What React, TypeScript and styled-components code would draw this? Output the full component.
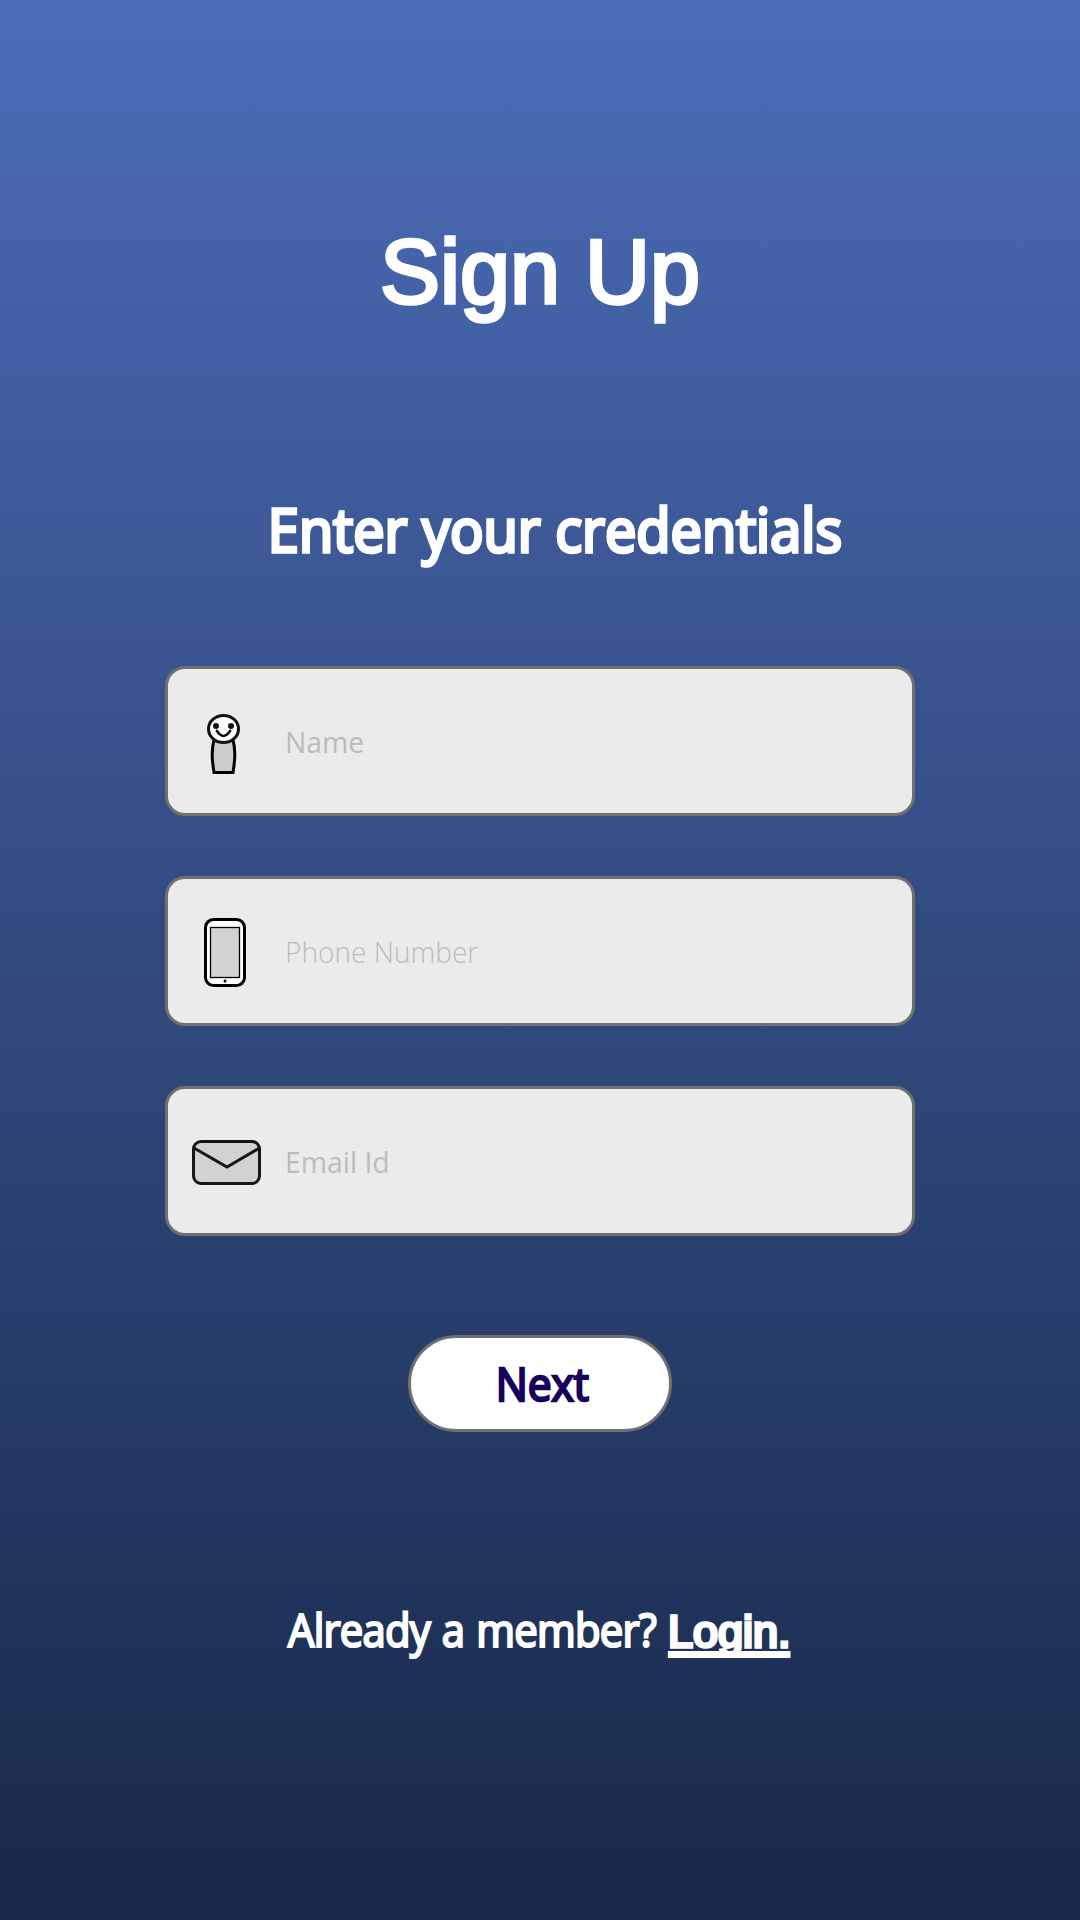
import React from "react";
import styled, { createGlobalStyle } from "styled-components";

const GlobalStyle = createGlobalStyle`
  * { box-sizing: border-box; }
  body { margin: 0; }
`;

const sans = `"Segoe UI", "Open Sans", "Noto Sans", sans-serif`;
const arial = `Arial, "Liberation Sans", sans-serif`;

const Screen = styled.main`
  display: flex;
  flex-direction: column;
  align-items: center;
  width: 1080px;
  height: 1920px;
  overflow: hidden;
  background: linear-gradient(180deg, #4b6cb7 0%, #182848 100%);
  color: #fff;
  white-space: nowrap;
`;

const Title = styled.h1`
  margin: 222px 0 0;
  font: 400 90px/100px ${arial};
  transform: scaleY(1.015);
  transform-origin: 50% 82%;
  -webkit-text-stroke: 3.4px #fff;
`;

const Subtitle = styled.h2`
  margin: 167px 0 0;
  padding-left: 33px;
  font: 400 60px/80px ${sans};
  transform: scaleX(0.932);
  -webkit-text-stroke: 3.6px #fff;
`;

const Fields = styled.form`
  display: flex;
  flex-direction: column;
  gap: 60px;
  margin-top: 97px;
`;

const Field = styled.div`
  display: flex;
  align-items: center;
  width: 750px;
  height: 150px;
  border: 3px solid #707070;
  border-radius: 20px;
  background: #ebebeb;
`;

const IconSlot = styled.span`
  display: flex;
  width: 117px;
  height: 144px;

  svg { display: block; }
`;

const Hint = styled.span<{ $weight: number; $stretch: number }>`
  padding-top: 2px;
  color: #bcbcbc;
  font: ${(p) => p.$weight} 30px/40px ${sans};
  transform: scaleX(${(p) => p.$stretch});
  transform-origin: left;
`;

const NextButton = styled.button`
  display: flex;
  align-items: center;
  justify-content: center;
  width: 264px;
  height: 97px;
  margin: 99px 0 0;
  padding: 1px 0 0 4px;
  border: 3px solid #707070;
  border-radius: 49px;
  background: #fff;
  color: #16006e;
  font: 400 45px/60px ${sans};
  -webkit-text-stroke: 2.4px #170058;

  span { transform: scaleX(0.945); }
`;

const Footer = styled.p`
  display: flex;
  align-items: baseline;
  justify-content: space-between;
  width: 503px;
  margin: 168px 2px 0 0;
  font: 400 45px/60px ${sans};
  -webkit-text-stroke: 2.2px #fff;
`;

const Question = styled.span`
  width: 369px;
  letter-spacing: -0.85px;
  word-spacing: 2px;
  transform: scaleX(0.93);
  transform-origin: left;
`;

const LoginLink = styled.a`
  color: #fff;
  font-family: ${arial};
  text-decoration: underline;
  text-decoration-skip-ink: none;
  text-decoration-thickness: 7px;
  text-underline-offset: 4px;
  -webkit-text-stroke: 3.4px #fff;
`;

const PersonIcon = () => (
  <svg width="116" height="144" viewBox="168 669 116 144" fill="none">
    <path d="M214.5 738C211 750 212 760 214 772.5H233C235 760 236 750 232.5 738Z" fill="#ccc" stroke="#000" strokeWidth="3" />
    <ellipse cx="223.5" cy="729" rx="15" ry="13.5" fill="#fff" stroke="#111" strokeWidth="3" />
    <circle cx="216" cy="726" r="3" fill="#111" />
    <circle cx="231" cy="726" r="3" fill="#111" />
    <path d="M216.8 730.8Q223.5 741 230.2 730.8" stroke="#111" strokeWidth="2.5" strokeLinecap="round" />
  </svg>
);

const PhoneIcon = () => (
  <svg width="116" height="144" viewBox="168 879 116 144" fill="none">
    <rect x="205.5" y="919.5" width="39" height="66" rx="8" fill="#fff" stroke="#000" strokeWidth="3" />
    <rect x="210.5" y="927.5" width="29" height="50" fill="#d2d2d2" stroke="#000" strokeWidth="1.3" />
    <circle cx="225" cy="981" r="1.5" fill="#000" />
  </svg>
);

const MailIcon = () => (
  <svg width="116" height="144" viewBox="168 1089 116 144" fill="none" stroke="#161616" strokeWidth="3">
    <rect x="193.5" y="1141.5" width="66" height="42" rx="7.5" fill="#d2d2d2" />
    <path d="M194 1148L227 1167L259.5 1148" />
  </svg>
);

const fields = [
  { label: "Name", icon: <PersonIcon />, weight: 400, stretch: 0.945 },
  { label: "Phone Number", icon: <PhoneIcon />, weight: 300, stretch: 0.935 },
  { label: "Email Id", icon: <MailIcon />, weight: 400, stretch: 0.945 },
];

export default function App() {
  return (
    <>
      <GlobalStyle />
      <Screen>
        <Title>Sign Up</Title>
        <Subtitle>Enter your credentials</Subtitle>
        <Fields>
          {fields.map((f) => (
            <Field key={f.label}>
              <IconSlot>{f.icon}</IconSlot>
              <Hint $weight={f.weight} $stretch={f.stretch}>{f.label}</Hint>
            </Field>
          ))}
        </Fields>
        <NextButton type="button"><span>Next</span></NextButton>
        <Footer>
          <Question>Already a member?</Question>
          <LoginLink>Login.</LoginLink>
        </Footer>
      </Screen>
    </>
  );
}
